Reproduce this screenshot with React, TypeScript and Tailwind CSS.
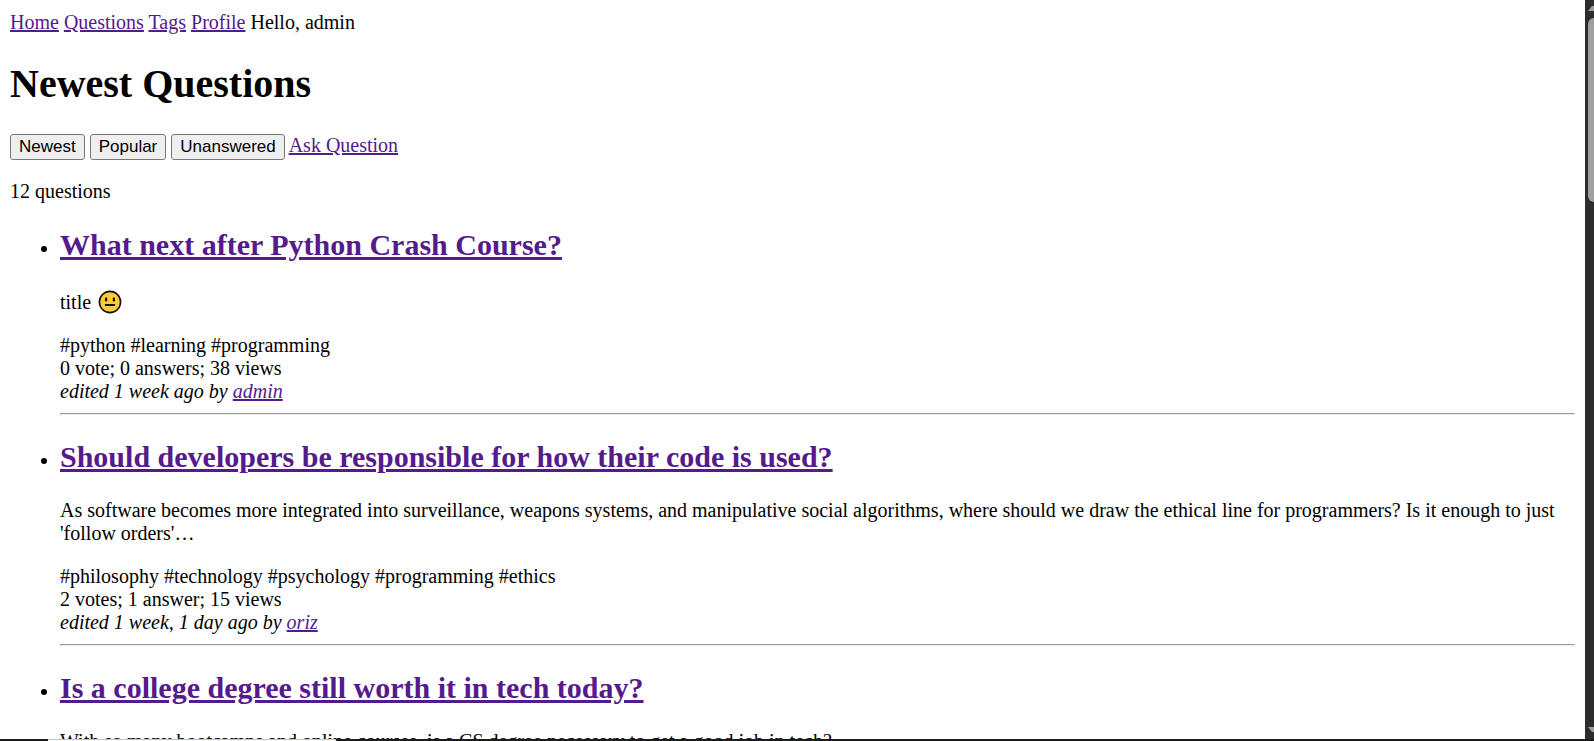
import type { ReactNode } from "react";

type Question = {
  title: string;
  body: ReactNode;
  tags: string[];
  stats: string;
  edited: string;
  author: string;
};

function NeutralFace() {
  return (
    <svg
      role="img"
      aria-label="neutral face"
      viewBox="0 0 24 24"
      className="mx-0.5 mt-[3px] inline-block size-6 align-[-5px]"
    >
      <circle cx="12" cy="12" r="10.6" fill="#ffc83d" stroke="#111" strokeWidth="1.6" />
      <rect x="7" y="7.6" width="2.2" height="4" rx="1" fill="#111" />
      <rect x="14.8" y="7.6" width="2.2" height="4" rx="1" fill="#111" />
      <rect x="6.8" y="14" width="10.4" height="2" rx="0.7" fill="#111" />
    </svg>
  );
}

const questions: Question[] = [
  {
    title: "What next after Python Crash Course?",
    body: (
      <>
        title <NeutralFace />
      </>
    ),
    tags: ["python", "learning", "programming"],
    stats: "0 vote; 0 answers; 38 views",
    edited: "edited 1 week ago by",
    author: "admin",
  },
  {
    title: "Should developers be responsible for how their code is used?",
    body: "As software becomes more integrated into surveillance, weapons systems, and manipulative social algorithms, where should we draw the ethical line for programmers? Is it enough to just 'follow orders'…",
    tags: ["philosophy", "technology", "psychology", "programming", "ethics"],
    stats: "2 votes; 1 answer; 15 views",
    edited: "edited 1 week, 1 day ago by",
    author: "oriz",
  },
  {
    title: "Is a college degree still worth it in tech today?",
    body: "With so many bootcamps and online courses, is a CS degree necessary to get a good job in tech?",
    tags: [],
    stats: "",
    edited: "",
    author: "",
  },
];

function Link({ children }: { children: ReactNode }) {
  return (
    <a href="#" className="text-[#551a8b] underline decoration-2">
      {children}
    </a>
  );
}

function FilterButton({ children }: { children: ReactNode }) {
  return (
    <button
      type="button"
      className="h-[26px] rounded-[3px] border border-[#767676] bg-[#efefef] px-2 font-['Liberation_Sans',sans-serif] text-[17px] leading-5"
    >
      {children}
    </button>
  );
}

function QuestionItem({ question }: { question: Question }) {
  return (
    <li>
      <h2 className="my-[25px] text-[30px] leading-[34px] font-bold">
        <a href="#" className="text-[#551a8b] underline decoration-3">
          {question.title}
        </a>
      </h2>
      <p className="my-5">{question.body}</p>
      {question.author && (
        <>
          <div>{question.tags.map((tag) => `#${tag}`).join(" ")}</div>
          <div>{question.stats}</div>
          <div className="italic">
            {question.edited} <Link>{question.author}</Link>
          </div>
          <hr className="my-2.5 border border-t-[#9a9a9a] border-r-[#eee] border-b-[#eee] border-l-[#9a9a9a]" />
        </>
      )}
    </li>
  );
}

function Scrollbar() {
  return (
    <div aria-hidden="true" className="flex w-[9px] shrink-0 flex-col overflow-hidden bg-[#2c2c2c] pt-1.5 pb-[7px] pl-[3px]">
      <svg viewBox="0 0 10 5" className="h-[5px] w-2.5 shrink-0">
        <path d="M0 5 L4 0 H6 L10 5 Z" fill="#9f9f9f" />
      </svg>
      <div className="mt-[7px] h-[184px] w-3 rounded-md bg-[#9f9f9f]" />
      <svg viewBox="0 0 10 5" className="mt-auto h-[5px] w-2.5 shrink-0">
        <path d="M0 0 L4 5 H6 L10 0 Z" fill="#9f9f9f" />
      </svg>
    </div>
  );
}

export default function App() {
  return (
    <div className="flex h-screen flex-col overflow-hidden bg-white font-['Liberation_Serif',serif] text-[20px] leading-[23px] text-black">
      <div className="flex min-h-0 flex-1">
        <main className="min-w-0 flex-1 overflow-hidden px-2.5 pt-[11px]">
          <nav>
            <Link>Home</Link> <Link>Questions</Link> <Link>Tags</Link> <Link>Profile</Link> Hello, admin
          </nav>
          <h1 className="my-[27px] text-[40px] leading-[46px] font-bold">Newest Questions</h1>
          <div>
            <FilterButton>Newest</FilterButton> <FilterButton>Popular</FilterButton>{" "}
            <FilterButton>Unanswered</FilterButton> <Link>Ask Question</Link>
          </div>
          <p className="my-5">12 questions</p>
          <ul className="list-disc pl-[50px]">
            {questions.map((question) => (
              <QuestionItem key={question.title} question={question} />
            ))}
          </ul>
        </main>
        <Scrollbar />
      </div>
      <div aria-hidden="true" className="flex h-0.5 shrink-0 bg-[#1c1c1c]">
        <div className="ml-12 w-72 border-t border-[#c4c4c4] bg-white" />
      </div>
    </div>
  );
}
